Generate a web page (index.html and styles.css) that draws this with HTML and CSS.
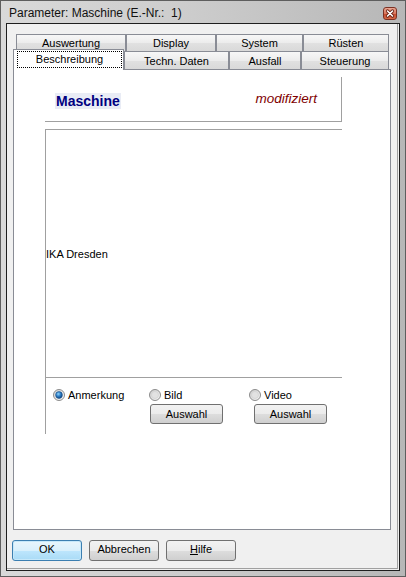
FILE: index.html
```html
<!DOCTYPE html>
<html lang="de">
<head>
<meta charset="utf-8">
<title>Parameter: Maschine</title>
<link rel="stylesheet" href="styles.css">
</head>
<body>
<div class="window">
  <div class="titlebar">
    <span class="title">Parameter: Maschine (E.-Nr.:&nbsp; 1)</span>
    <div class="close">
      <svg width="12" height="11" viewBox="0 0 12 11">
        <path d="M3.5 3 L8.5 8 M8.5 3 L3.5 8" stroke="#6a2012" stroke-width="3.2" stroke-linecap="round"/>
        <path d="M3.5 3 L8.5 8 M8.5 3 L3.5 8" stroke="#ffffff" stroke-width="1.6" stroke-linecap="round"/>
      </svg>
    </div>
  </div>
  <div class="client">
    <div class="tabctl">
      <div class="tabrow back">
        <div class="tab t-ausw">Auswertung</div>
        <div class="tab t-disp">Display</div>
        <div class="tab t-sys">System</div>
        <div class="tab t-rue">Rüsten</div>
      </div>
      <div class="tabrow front">
        <div class="tab sel t-besch"><span class="focus">Beschreibung</span></div>
        <div class="tab t-techn">Techn. Daten</div>
        <div class="tab t-ausf">Ausfall</div>
        <div class="tab t-steu">Steuerung</div>
      </div>
      <div class="page">
        <div class="headbox">
          <span class="name">Maschine</span>
          <span class="mod">modifiziert</span>
        </div>
        <div class="mainbox">
          <div class="textarea">IKA Dresden</div>
          <div class="radios">
            <div class="radio">
              <svg width="12" height="12" viewBox="0 0 12 12">
                <defs>
                  <linearGradient id="ring1" x1="0" y1="0" x2="1" y2="1">
                    <stop offset="0" stop-color="#d2d2d2"/>
                    <stop offset="1" stop-color="#fcfcfc"/>
                  </linearGradient>
                  <radialGradient id="dot1" cx="0.4" cy="0.35" r="0.7">
                    <stop offset="0" stop-color="#8fd6ff"/>
                    <stop offset="0.5" stop-color="#2d7cc4"/>
                    <stop offset="1" stop-color="#0c3f78"/>
                  </radialGradient>
                </defs>
                <circle cx="6" cy="6" r="5.5" fill="url(#ring1)" stroke="#8c8c8c"/>
                <circle cx="6" cy="6" r="3.4" fill="url(#dot1)" stroke="#1b4f86" stroke-width="0.6"/>
              </svg>
              <span>Anmerkung</span>
            </div>
            <div class="radio">
              <svg width="12" height="12" viewBox="0 0 12 12">
                <defs>
                  <linearGradient id="ring2" x1="0" y1="0" x2="1" y2="1">
                    <stop offset="0" stop-color="#c9c9c9"/>
                    <stop offset="1" stop-color="#fafafa"/>
                  </linearGradient>
                </defs>
                <circle cx="6" cy="6" r="5.5" fill="url(#ring2)" stroke="#8c8c8c"/>
                <circle cx="6" cy="6" r="3.5" fill="#e2e2e2" stroke="#cfcfcf" stroke-width="0.6"/>
              </svg>
              <span>Bild</span>
            </div>
            <div class="radio">
              <svg width="12" height="12" viewBox="0 0 12 12">
                <defs>
                  <linearGradient id="ring3" x1="0" y1="0" x2="1" y2="1">
                    <stop offset="0" stop-color="#c9c9c9"/>
                    <stop offset="1" stop-color="#fafafa"/>
                  </linearGradient>
                </defs>
                <circle cx="6" cy="6" r="5.5" fill="url(#ring3)" stroke="#8c8c8c"/>
                <circle cx="6" cy="6" r="3.5" fill="#e2e2e2" stroke="#cfcfcf" stroke-width="0.6"/>
              </svg>
              <span>Video</span>
            </div>
            <span></span>
            <div class="btn pick pick1">Auswahl</div>
            <div class="btn pick pick2">Auswahl</div>
          </div>
        </div>
      </div>
    </div>
    <div class="actions">
      <div class="btn big default">OK</div>
      <div class="btn big">Abbrechen</div>
      <div class="btn big"><u>H</u>ilfe</div>
    </div>
  </div>
</div>
</body>
</html>
```

FILE: styles.css
```css
html, body {
  margin: 0;
  padding: 0;
  overflow: hidden;
}

body {
  font-family: "Liberation Sans", Arial, sans-serif;
  font-size: 11px;
  color: #000;
}

.window {
  width: 406px;
  height: 577px;
  box-sizing: border-box;
  border: 1px solid #5e5e5e;
  background: linear-gradient(to right, #d9d9d9 0%, #cdcdcd 45%, #b7b7b7 100%);
  padding: 0 5px 5px 5px;
  display: flex;
  flex-direction: column;
}

.titlebar {
  height: 22px;
  flex: none;
  display: flex;
  justify-content: space-between;
  align-items: flex-start;
}

.title {
  font-size: 12px;
  line-height: 22px;
  padding: 1px 0 0 3px;
  color: #111;
}

.close {
  width: 14px;
  height: 13px;
  box-sizing: border-box;
  margin: 6px 3px 0 0;
  border: 1px solid #7d3224;
  border-radius: 3px;
  background: linear-gradient(#eba894 0%, #d9785e 50%, #c4492c 51%, #d66a48 100%);
  display: flex;
  align-items: center;
  justify-content: center;
}

.close svg {
  display: block;
}

.client {
  flex: 1;
  box-sizing: border-box;
  background: #f0f0f0;
  border: 1px solid #1e1e1e;
  box-shadow: inset -1px -1px 0 #f0f0f0, inset -2px -2px 0 #a0a0a0;
  padding: 10px 8px 0 6px;
}

.tabctl {
  width: 378px;
}

.tabrow {
  display: flex;
}

.tabrow.back {
  height: 17px;
  padding-left: 3px;
}

.tabrow.front {
  height: 18px;
}

.tab {
  box-sizing: border-box;
  border: 1px solid #898c95;
  border-bottom: none;
  background: linear-gradient(#f7f7f7 0%, #ececec 50%, #e1e1e1 51%, #d9d9d9 100%);
  text-align: center;
  white-space: nowrap;
}

.back .tab {
  height: 17px;
  line-height: 15px;
  padding-top: 1px;
}

.front .tab {
  height: 18px;
  line-height: 16px;
  padding-top: 1px;
}

.front .tab.sel {
  height: 21px;
  margin-top: -2px;
  padding: 1px 1px 0 3px;
  background: #fff;
  position: relative;
  z-index: 1;
}

.focus {
  display: block;
  box-sizing: border-box;
  height: 17px;
  border: 1px dotted #000;
  line-height: 15px;
}

.t-ausw { width: 110px; }
.t-disp { width: 90px; }
.t-sys { width: 87px; }
.t-rue { width: 86px; }
.t-besch { width: 111px; }
.t-techn { width: 105px; }
.t-ausf { width: 72px; }
.t-steu { width: 88px; }

.page {
  width: 378px;
  height: 461px;
  box-sizing: border-box;
  border: 1px solid #898c95;
  background: #fff;
  padding: 7px 0 0 31px;
}

.headbox {
  width: 297px;
  height: 45px;
  box-sizing: border-box;
  border-right: 1px solid #a0a0a0;
  border-bottom: 1px solid #a0a0a0;
  display: flex;
  justify-content: space-between;
  align-items: flex-start;
  padding: 16px 24px 0 10px;
}

.name {
  font-weight: bold;
  font-size: 14px;
  line-height: 16px;
  color: #000080;
  background: #e9ecf5;
  padding: 0 1px;
}

.mod {
  font-style: italic;
  font-size: 13.5px;
  line-height: 16px;
  color: #800000;
  margin-top: -2px;
}

.mainbox {
  margin-top: 7px;
  width: 297px;
  height: 305px;
  box-sizing: border-box;
  border-top: 1px solid #a0a0a0;
  border-left: 1px solid #a0a0a0;
  display: flex;
  flex-direction: column;
}

.textarea {
  height: 247px;
  flex: none;
  display: flex;
  align-items: center;
}

.radios {
  flex: 1;
  border-top: 1px solid #a0a0a0;
  display: grid;
  grid-template-columns: 96px 100px 1fr;
  grid-template-rows: 14px 20px;
  row-gap: 2px;
  align-content: start;
  padding: 10px 0 0 7px;
}

.radio {
  display: flex;
  align-items: center;
  gap: 3px;
  line-height: 14px;
}

.radio svg {
  display: block;
  flex: none;
}

.btn {
  box-sizing: border-box;
  border: 1px solid #707070;
  border-radius: 3px;
  background: linear-gradient(#f2f2f2 0%, #ebebeb 50%, #dddddd 51%, #cfcfcf 100%);
  text-align: center;
  line-height: 18px;
  color: #000;
}

.pick {
  width: 73px;
  height: 20px;
}

.pick1 { margin-left: 1px; }
.pick2 { margin-left: 5px; }

.actions {
  display: flex;
  gap: 7px;
  margin: 10px 0 0 -1px;
}

.big {
  width: 70px;
  height: 21px;
  line-height: 17px;
  padding-bottom: 2px;
}

.default {
  border-color: #3c7fb1;
  background: linear-gradient(#e8f5fc 0%, #d9f0fc 50%, #bee6fd 51%, #a9dbf6 100%);
  box-shadow: inset 0 0 0 1px #c6e8fa;
}
```
